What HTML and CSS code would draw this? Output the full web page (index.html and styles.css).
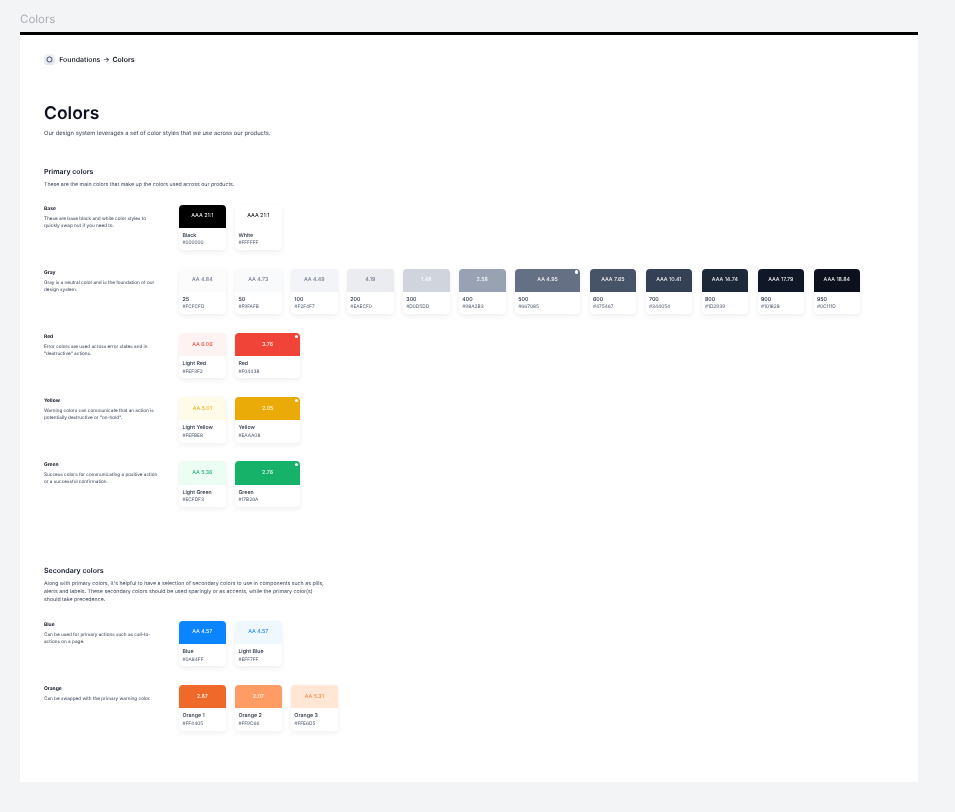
FILE: index.html
```html
<!DOCTYPE html>
<html lang="en">
<head>
<meta charset="utf-8">
<title>Colors</title>
<link rel="stylesheet" href="styles.css">
</head>
<body>
<div class="page-title">Colors</div>
<main class="frame">
  <nav class="crumbs">
    <span class="crumb-icon"><svg viewBox="0 0 12 12" width="7" height="7"><circle cx="6" cy="6" r="4.4" fill="none" stroke="#101828" stroke-width="1.3"/></svg></span>
    <span>Foundations</span><span class="arrow">→</span><span class="crumb-current">Colors</span>
  </nav>
  <h1>Colors</h1>
  <p class="lead">Our design system leverages a set of color styles that we use across our products.</p>

  <section class="primary">
    <h2>Primary colors</h2>
    <p class="section-sub">These are the main colors that make up the colors used across our products.</p>
    <div class="row r-base">
      <div class="info"><h3>Base</h3><p>These are base black and white color styles to quickly swap out if you need to.</p></div>
      <div class="cards">
        <div class="card"><div class="swatch c-black t-white">AAA 21:1</div><div class="meta"><b>Black</b><span>#000000</span></div></div>
        <div class="card"><div class="swatch c-white t-black">AAA 21:1</div><div class="meta"><b>White</b><span>#FFFFFF</span></div></div>
      </div>
    </div>
    <div class="row r-gray">
      <div class="info"><h3>Gray</h3><p>Gray is a neutral color and is the foundation of our design system.</p></div>
      <div class="cards">
        <div class="card"><div class="swatch c-g25 t-gray">AA 4.84</div><div class="meta"><b>25</b><span>#FCFCFD</span></div></div>
        <div class="card"><div class="swatch c-g50 t-gray">AA 4.73</div><div class="meta"><b>50</b><span>#F9FAFB</span></div></div>
        <div class="card"><div class="swatch c-g100 t-gray">AA 4.49</div><div class="meta"><b>100</b><span>#F2F4F7</span></div></div>
        <div class="card"><div class="swatch c-g200 t-gray">4.19</div><div class="meta"><b>200</b><span>#EAECF0</span></div></div>
        <div class="card"><div class="swatch c-g300 t-white">1.48</div><div class="meta"><b>300</b><span>#D0D5DD</span></div></div>
        <div class="card"><div class="swatch c-g400 t-white">2.58</div><div class="meta"><b>400</b><span>#98A2B3</span></div></div>
        <div class="card wide"><div class="swatch c-g500 t-white dot">AA 4.95</div><div class="meta"><b>500</b><span>#667085</span></div></div>
        <div class="card"><div class="swatch c-g600 t-white">AAA 7.65</div><div class="meta"><b>600</b><span>#475467</span></div></div>
        <div class="card"><div class="swatch c-g700 t-white">AAA 10.41</div><div class="meta"><b>700</b><span>#344054</span></div></div>
        <div class="card"><div class="swatch c-g800 t-white">AAA 14.74</div><div class="meta"><b>800</b><span>#1D2939</span></div></div>
        <div class="card"><div class="swatch c-g900 t-white">AAA 17.79</div><div class="meta"><b>900</b><span>#101828</span></div></div>
        <div class="card"><div class="swatch c-g950 t-white">AAA 18.84</div><div class="meta"><b>950</b><span>#0C111D</span></div></div>
      </div>
    </div>
    <div class="row">
      <div class="info"><h3>Red</h3><p>Error colors are used across error states and in "destructive" actions.</p></div>
      <div class="cards">
        <div class="card"><div class="swatch c-lred t-red">AA 6.06</div><div class="meta"><b>Light Red</b><span>#FEF3F2</span></div></div>
        <div class="card wide"><div class="swatch c-red t-white dot">3.76</div><div class="meta"><b>Red</b><span>#F04438</span></div></div>
      </div>
    </div>
    <div class="row">
      <div class="info"><h3>Yellow</h3><p>Warning colors can communicate that an action is potentially destructive or "on-hold".</p></div>
      <div class="cards">
        <div class="card"><div class="swatch c-lyellow t-yellow">AA 5.01</div><div class="meta"><b>Light Yellow</b><span>#FEFBE8</span></div></div>
        <div class="card wide"><div class="swatch c-yellow t-white dot">2.05</div><div class="meta"><b>Yellow</b><span>#EAAA08</span></div></div>
      </div>
    </div>
    <div class="row">
      <div class="info"><h3>Green</h3><p>Success colors for communicating a positive action or a successful confirmation.</p></div>
      <div class="cards">
        <div class="card"><div class="swatch c-lgreen t-green">AA 5.36</div><div class="meta"><b>Light Green</b><span>#ECFDF3</span></div></div>
        <div class="card wide"><div class="swatch c-green t-white dot">2.76</div><div class="meta"><b>Green</b><span>#17B26A</span></div></div>
      </div>
    </div>
  </section>

  <section class="secondary">
    <h2>Secondary colors</h2>
    <p class="section-sub wrap">Along with primary colors, it's helpful to have a selection of secondary colors to use in components such as pills, alerts and labels. These secondary colors should be used sparingly or as accents, while the primary color(s) should take precedence.</p>
    <div class="row r-blue">
      <div class="info"><h3>Blue</h3><p>Can be used for primary actions such as call-to-actions on a page.</p></div>
      <div class="cards">
        <div class="card"><div class="swatch c-blue t-white">AA 4.57</div><div class="meta"><b>Blue</b><span>#0A84FF</span></div></div>
        <div class="card"><div class="swatch c-lblue t-blue">AA 4.57</div><div class="meta"><b>Light Blue</b><span>#EFF7FF</span></div></div>
      </div>
    </div>
    <div class="row">
      <div class="info"><h3>Orange</h3><p>Can be swapped with the primary warning color.</p></div>
      <div class="cards">
        <div class="card"><div class="swatch c-o1 t-white">2.87</div><div class="meta"><b>Orange 1</b><span>#FF4405</span></div></div>
        <div class="card"><div class="swatch c-o2 t-white">2.07</div><div class="meta"><b>Orange 2</b><span>#FF9C66</span></div></div>
        <div class="card"><div class="swatch c-o3 t-orange">AA 5.31</div><div class="meta"><b>Orange 3</b><span>#FFE6D5</span></div></div>
      </div>
    </div>
  </section>
</main>
</body>
</html>
```

FILE: styles.css
```css
* { box-sizing: border-box; }
html, body { margin: 0; height: 100%; }
body {
  background: #f3f4f6;
  font-family: Inter, "Liberation Sans", sans-serif;
  color: #101828;
  padding: 12px 37px 30px 20px;
  height: 812px;
  overflow: hidden;
  text-rendering: geometricPrecision;
}
.page-title { font-size: 11.5px; line-height: 14px; color: #a9adb3; height: 20px; filter: blur(.3px); }
.frame {
  background: #fff;
  border-top: 3.5px solid #000;
  height: 750px;
  padding: 18.5px 24px 0;
  filter: blur(.3px);
}
.crumbs { display: flex; align-items: center; gap: 2.7px; font-size: 7px; font-weight: 500; color: #0c111d; height: 12px; }
.crumb-current { font-weight: 600; }
.crumb-icon { width: 11px; height: 11px; border-radius: 3px; background: linear-gradient(#f2f4f7, #dfe3ec); display: flex; align-items: center; justify-content: center; margin-right: 2px; margin-left: -.5px; }
.crumb-icon svg { display: block; }
h1 { margin: 37.5px 0 0; font-size: 17.5px; line-height: 22px; font-weight: 600; color: #0c111d; }
.lead { margin: 3.5px 0 0; font-size: 5.8px; line-height: 10px; color: #344054; }
h2 { margin: 0; font-size: 7px; line-height: 12px; font-weight: 600; color: #101828; }
.primary { margin-top: 27px; }
.section-sub { margin: 3.5px 0 0; font-size: 5.25px; line-height: 8px; color: #344054; }
.section-sub.wrap { width: 285px; }
.row { display: flex; margin-bottom: 18.6px; }
.r-base { margin-top: 15.5px; }
.r-blue { margin-top: 16.5px; }
.info { width: 135px; flex: none; padding-top: 1px; }
.info h3 { margin: 0; font-size: 4.95px; line-height: 7.5px; font-weight: 700; color: #101828; }
.info p { margin: 2.5px 0 0; font-size: 4.68px; line-height: 7px; color: #344054; width: 115px; }
.cards { display: flex; gap: 9.33px; }
.card {
  width: 46.67px;
  height: 45.6px;
  flex: none;
  border-radius: 4px;
  background: #fff;
  box-shadow: 0 2px 5px rgba(16, 24, 40, .07);
  overflow: hidden;
}
.card.wide { width: 65.33px; }
.swatch {
  position: relative;
  height: 23.3px;
  display: flex;
  align-items: center;
  justify-content: center;
  font-size: 5.4px;
  font-weight: 400;
}
.dot::after {
  content: "";
  position: absolute;
  top: 1.8px;
  right: 2px;
  width: 3.4px;
  height: 3.4px;
  border-radius: 50%;
  background: #fff;
}
.meta { padding: 5px 3.4px 0; display: flex; flex-direction: column; }
.meta b { font-size: 5.3px; line-height: 7.5px; font-weight: 500; color: #1d2939; white-space: nowrap; }
.meta span { font-size: 4.8px; line-height: 7px; color: #475467; }
.t-white { color: #fff; }
.t-black { color: #000; }
.t-gray { color: #667085; }
.t-red { color: #f04438; }
.t-yellow { color: #eaaa08; }
.t-green { color: #17b26a; }
.t-blue { color: #0a84ff; }
.t-orange { color: #f38744; }
.c-black { background: #000; }
.c-white { background: #fff; }
.c-g25 { background: #fcfcfd; }
.c-g50 { background: #f9fafb; }
.c-g100 { background: #f2f4f7; }
.c-g200 { background: #eaecf0; }
.c-g300 { background: #d0d5dd; }
.c-g400 { background: #98a2b3; }
.c-g500 { background: #667085; }
.c-g600 { background: #475467; }
.c-g700 { background: #344054; }
.c-g800 { background: #1d2939; }
.c-g900 { background: #101828; }
.c-g950 { background: #0c111d; }
.c-lred { background: #fef3f2; }
.c-red { background: #f04438; }
.c-lyellow { background: #fefbe8; }
.c-yellow { background: #eaaa08; }
.c-lgreen { background: #ecfdf3; }
.c-green { background: #17b26a; }
.c-blue { background: #0a84ff; }
.c-lblue { background: #eff7ff; }
.c-o1 { background: #ef6a2a; }
.c-o2 { background: #ff9c66; }
.c-o3 { background: #ffe6d5; }
.secondary { margin-top: 58px; }
```
